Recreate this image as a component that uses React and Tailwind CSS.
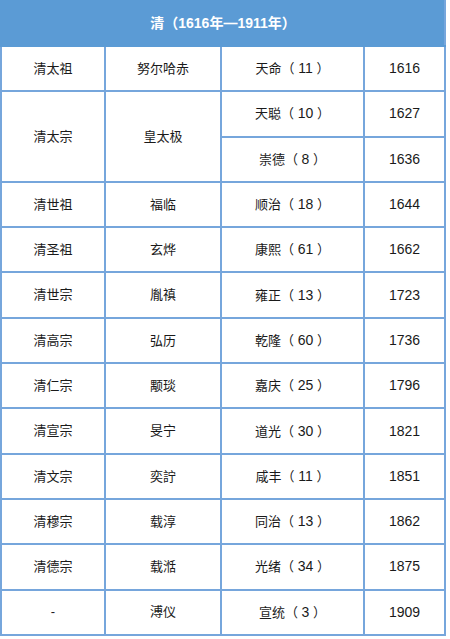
import React from 'react';

const rows = [
  { title: '清太祖', name: '努尔哈赤', eras: [['天命', '11', '1616']] },
  { title: '清太宗', name: '皇太极', eras: [['天聪', '10', '1627'], ['崇德', '8', '1636']] },
  { title: '清世祖', name: '福临', eras: [['顺治', '18', '1644']] },
  { title: '清圣祖', name: '玄烨', eras: [['康熙', '61', '1662']] },
  { title: '清世宗', name: '胤禛', eras: [['雍正', '13', '1723']] },
  { title: '清高宗', name: '弘历', eras: [['乾隆', '60', '1736']] },
  { title: '清仁宗', name: '颙琰', eras: [['嘉庆', '25', '1796']] },
  { title: '清宣宗', name: '旻宁', eras: [['道光', '30', '1821']] },
  { title: '清文宗', name: '奕詝', eras: [['咸丰', '11', '1851']] },
  { title: '清穆宗', name: '载淳', eras: [['同治', '13', '1862']] },
  { title: '清德宗', name: '载湉', eras: [['光绪', '34', '1875']] },
  { title: '-', name: '溥仪', eras: [['宣统', '3', '1909']] },
];

const cell = 'border-2 border-[#76a6dc] text-center align-middle p-0';

export default function App() {
  return (
    <div className="w-[450px] h-[639px] bg-white" style={{ fontFamily: '"Liberation Sans", "Noto Sans CJK SC", sans-serif' }}>
      <table className="w-[444px] border-collapse table-fixed text-[13px] text-[#1a1a1a]">
        <colgroup>
          <col className="w-[104px]" />
          <col className="w-[116px]" />
          <col className="w-[143px]" />
          <col className="w-[81px]" />
        </colgroup>
        <thead>
          <tr className="h-[45px]">
            <th colSpan={4} className="bg-[#5b9bd5] text-white font-bold text-[14px] border-2 border-[#5b9bd5] border-r-[#76a6dc]">
              清（1616年—1911年）
            </th>
          </tr>
        </thead>
        <tbody>
          {rows.map((r) =>
            r.eras.map((e, i) => (
              <tr key={r.title + i} className="h-[45.3px]">
                {i === 0 && (
                  <>
                    <td rowSpan={r.eras.length} className={cell}>{r.title}</td>
                    <td rowSpan={r.eras.length} className={cell}>{r.name}</td>
                  </>
                )}
                <td className={cell}>
                  {e[0]}（ <span className="text-[14px]">{e[1]}</span> ）
                </td>
                <td className={cell + ' text-[14px]'}>{e[2]}</td>
              </tr>
            ))
          )}
        </tbody>
      </table>
    </div>
  );
}
